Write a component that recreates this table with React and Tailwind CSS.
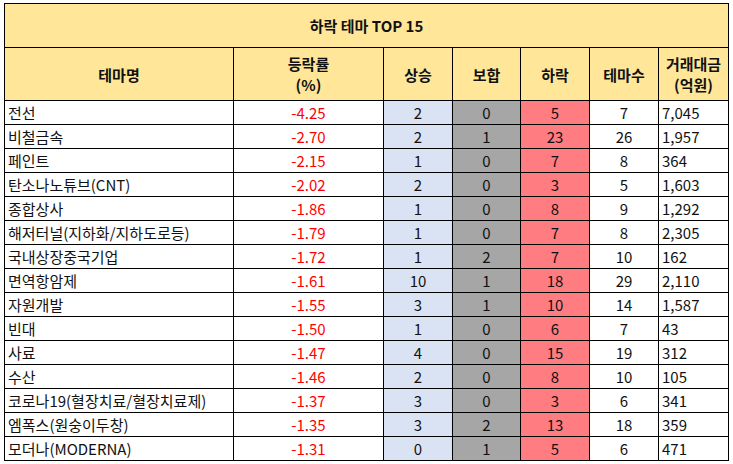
const rows = [
  ['전선', '-4.25', 2, 0, 5, 7, '7,045'],
  ['비철금속', '-2.70', 2, 1, 23, 26, '1,957'],
  ['페인트', '-2.15', 1, 0, 7, 8, '364'],
  ['탄소나노튜브(CNT)', '-2.02', 2, 0, 3, 5, '1,603'],
  ['종합상사', '-1.86', 1, 0, 8, 9, '1,292'],
  ['해저터널(지하화/지하도로등)', '-1.79', 1, 0, 7, 8, '2,305'],
  ['국내상장중국기업', '-1.72', 1, 2, 7, 10, '162'],
  ['면역항암제', '-1.61', 10, 1, 18, 29, '2,110'],
  ['자원개발', '-1.55', 3, 1, 10, 14, '1,587'],
  ['빈대', '-1.50', 1, 0, 6, 7, '43'],
  ['사료', '-1.47', 4, 0, 15, 19, '312'],
  ['수산', '-1.46', 2, 0, 8, 10, '105'],
  ['코로나19(혈장치료/혈장치료제)', '-1.37', 3, 0, 3, 6, '341'],
  ['엠폭스(원숭이두창)', '-1.35', 3, 2, 13, 18, '359'],
  ['모더나(MODERNA)', '-1.31', 0, 1, 5, 6, '471'],
];

export default function App() {
  const th = 'border border-black bg-[#ffe699] font-bold text-center leading-[21px] p-0';
  const td = 'border border-black h-[24px] p-0 leading-[22px]';

  return (
    <div className="w-[733px] h-[464px] bg-white pt-[3px] pl-[4px] text-[15px] text-[#111]" style={{ fontFamily: '"Noto Sans CJK KR", "Noto Sans", sans-serif' }}>
      <table className="table-fixed border-collapse w-[724px]">
        <colgroup>
          <col className="w-[229px]" />
          <col className="w-[150px]" />
          <col className="w-[69px]" />
          <col className="w-[68px]" />
          <col className="w-[69px]" />
          <col className="w-[69px]" />
          <col className="w-[70px]" />
        </colgroup>
        <thead>
          <tr>
            <th colSpan={7} className={`${th} h-[44px]`}>하락 테마 TOP 15</th>
          </tr>
          <tr className="h-[53px]">
            <th className={th}>테마명</th>
            <th className={th}>등락률<br />(%)</th>
            <th className={th}>상승</th>
            <th className={th}>보합</th>
            <th className={th}>하락</th>
            <th className={th}>테마수</th>
            <th className={th}>거래대금<br />(억원)</th>
          </tr>
        </thead>
        <tbody>
          {rows.map((r) => (
            <tr key={r[0]}>
              <td className={`${td} pl-[3px] whitespace-nowrap`}>{r[0]}</td>
              <td className={`${td} text-center text-[#ff0000]`}>{r[1]}</td>
              <td className={`${td} text-center bg-[#dae3f3]`}>{r[2]}</td>
              <td className={`${td} text-center bg-[#a6a6a6]`}>{r[3]}</td>
              <td className={`${td} text-center bg-[#ff7c80]`}>{r[4]}</td>
              <td className={`${td} text-center`}>{r[5]}</td>
              <td className={`${td} pl-[3px]`}>{r[6]}</td>
            </tr>
          ))}
        </tbody>
      </table>
    </div>
  );
}
